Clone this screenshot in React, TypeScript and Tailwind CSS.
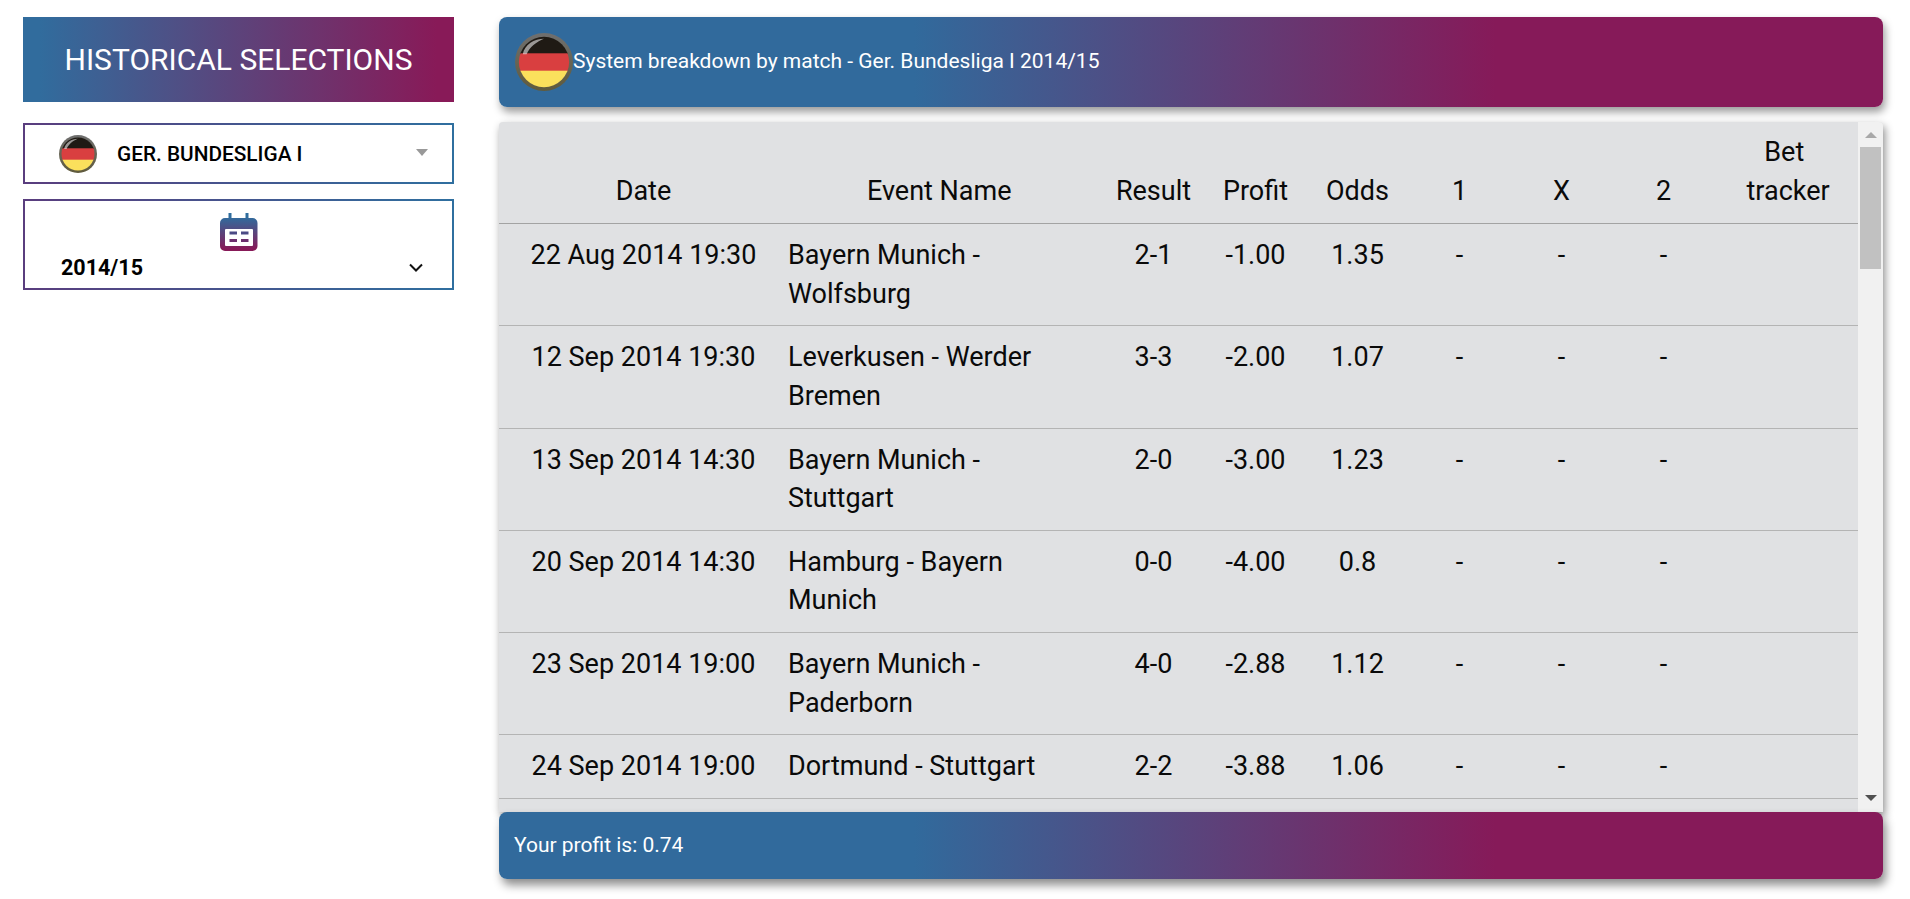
const rows = [
  { date: '22 Aug 2014 19:30', event: 'Bayern Munich - Wolfsburg', result: '2-1', profit: '-1.00', odds: '1.35' },
  { date: '12 Sep 2014 19:30', event: 'Leverkusen - Werder Bremen', result: '3-3', profit: '-2.00', odds: '1.07' },
  { date: '13 Sep 2014 14:30', event: 'Bayern Munich - Stuttgart', result: '2-0', profit: '-3.00', odds: '1.23' },
  { date: '20 Sep 2014 14:30', event: 'Hamburg - Bayern Munich', result: '0-0', profit: '-4.00', odds: '0.8' },
  { date: '23 Sep 2014 19:00', event: 'Bayern Munich - Paderborn', result: '4-0', profit: '-2.88', odds: '1.12' },
  { date: '24 Sep 2014 19:00', event: 'Dortmund - Stuttgart', result: '2-2', profit: '-3.88', odds: '1.06' },
];

function Flag({ id, className }: { id: string; className: string }) {
  return (
    <svg viewBox="0 0 60 60" className={className}>
      <defs>
        <clipPath id={id}>
          <circle cx="30" cy="30" r="26" />
        </clipPath>
        <linearGradient id={`${id}-ring`} x1="0" y1="0" x2="0" y2="1">
          <stop offset="0" stopColor="#6f6f6f" />
          <stop offset="1" stopColor="#5f5a3c" />
        </linearGradient>
      </defs>
      <circle cx="30" cy="30" r="30" fill={`url(#${id}-ring)`} />
      <g clipPath={`url(#${id})`}>
        <rect x="0" y="0" width="60" height="22" fill="#1f1a14" />
        <rect x="0" y="21" width="60" height="19" fill="#d93f40" />
        <rect x="0" y="39" width="60" height="21" fill="#fbe05c" />
        <path d="M8 22C10 12 20 6 30 6c-8 3-15 9-18 16z" fill="#ffffff" opacity="0.55" />
      </g>
    </svg>
  );
}

function CalendarIcon() {
  return (
    <svg viewBox="0 0 38 38" className="w-[38px] h-[38px]">
      <defs>
        <linearGradient id="cal-grad" x1="0" y1="0" x2="0" y2="1">
          <stop offset="0.1" stopColor="#2f6d9e" />
          <stop offset="0.95" stopColor="#871a58" />
        </linearGradient>
      </defs>
      <path
        d="M8.5 0h3v5h14V0h3v5h4a5 5 0 0 1 5 5v23a5 5 0 0 1-5 5H5a5 5 0 0 1-5-5V10a5 5 0 0 1 5-5h3.5z"
        fill="url(#cal-grad)"
      />
      <rect x="5" y="16" width="28" height="17" rx="1" fill="#ffffff" />
      <rect x="9.5" y="18.5" width="7.5" height="3" fill="#4b4a85" />
      <rect x="21" y="18.5" width="7.5" height="3" fill="#4b4a85" />
      <rect x="9.5" y="26" width="7.5" height="3" fill="#6b2f6e" />
      <rect x="21" y="26" width="7.5" height="3" fill="#6b2f6e" />
    </svg>
  );
}

export default function App() {
  return (
    <div className="flex min-h-screen bg-white font-[Roboto,sans-serif]">
      {/* Sidebar */}
      <aside className="w-[431px] ml-[23px] pt-[17px] shrink-0">
        <div className="h-[85px] flex items-center justify-center text-white text-[30px] leading-none bg-[linear-gradient(90deg,#316c9d_4%,#881a58_96%)]">
          HISTORICAL SELECTIONS
        </div>

        <div className="mt-[21px] p-[2px] h-[61px] bg-[linear-gradient(90deg,#5a3d7e,#2f6f9f)]">
          <div className="h-full bg-white flex items-center pl-[34px] pr-[24px]">
            <Flag id="flag-small" className="w-[38px] h-[38px]" />
            <span className="ml-[20px] mt-[2px] text-[20.8px] font-medium text-black">GER. BUNDESLIGA I</span>
            <span className="ml-auto mb-[3px] w-0 h-0 border-l-[6.5px] border-r-[6.5px] border-t-[7px] border-l-transparent border-r-transparent border-t-[#999999]" />
          </div>
        </div>

        <div className="mt-[15px] p-[2px] h-[91px] bg-[linear-gradient(90deg,#5a3d7e,#2f6f9f)]">
          <div className="h-full bg-white flex flex-col pt-[12px]">
            <div className="flex justify-center">
              <CalendarIcon />
            </div>
            <div className="flex items-center justify-between pl-[36px] pr-[29px] mt-[4px]">
              <span className="font-bold text-[21.5px] leading-[26px] text-black">2014/15</span>
              <svg viewBox="0 0 14 10" className="w-[14px] h-[10px]" fill="none" stroke="#111111" strokeWidth="2">
                <path d="M1 1.5l6 6 6-6" />
              </svg>
            </div>
          </div>
        </div>
      </aside>

      {/* Main */}
      <main className="w-[1384px] ml-[45px] pt-[17px] shrink-0">
        <div className="h-[90px] rounded-lg flex items-center pl-[16px] text-white text-[21px] bg-[linear-gradient(90deg,#316a9c_30%,#861a59_72%)] shadow-[2px_5px_8px_rgba(0,0,0,0.4)]">
          <Flag id="flag-large" className="w-[58px] h-[58px]" />
          <span>System breakdown by match - Ger. Bundesliga I 2014/15</span>
        </div>

        <div className="mt-[15px] h-[690px] flex overflow-hidden rounded-t bg-[#e0e1e3] shadow-[2px_4px_8px_rgba(0,0,0,0.45)]">
          <div className="w-[1359px] shrink-0">
            <table className="w-full table-fixed border-collapse text-[27px] leading-[38.6px] text-[#0a0a0a]">
              <colgroup>
                <col className="w-[289px]" />
                <col className="w-[314.5px]" />
                <col className="w-[102px]" />
                <col className="w-[102px]" />
                <col className="w-[102px]" />
                <col className="w-[102px]" />
                <col className="w-[102px]" />
                <col className="w-[102px]" />
                <col className="w-[143.5px]" />
              </colgroup>
              <thead>
                <tr className="border-b border-[#a3a3a3]">
                  <th className="pt-3 pb-[13px] font-normal align-bottom">Date</th>
                  <th className="pt-3 pb-[13px] pr-3 font-normal align-bottom">Event Name</th>
                  <th className="pt-3 pb-[13px] font-normal align-bottom">Result</th>
                  <th className="pt-3 pb-[13px] font-normal align-bottom">Profit</th>
                  <th className="pt-3 pb-[13px] font-normal align-bottom">Odds</th>
                  <th className="pt-3 pb-[13px] font-normal align-bottom">1</th>
                  <th className="pt-3 pb-[13px] font-normal align-bottom">X</th>
                  <th className="pt-3 pb-[13px] font-normal align-bottom">2</th>
                  <th className="pt-[11px] pb-[13px] pl-8 pr-9 font-normal align-bottom">Bet tracker</th>
                </tr>
              </thead>
              <tbody>
                {rows.map((row) => (
                  <tr key={row.date} className="border-b border-[#b4b4b4]">
                    <td className="py-3 text-center align-top">{row.date}</td>
                    <td className="py-3 pr-6 align-top">{row.event}</td>
                    <td className="py-3 text-center align-top">{row.result}</td>
                    <td className="py-3 text-center align-top">{row.profit}</td>
                    <td className="py-3 text-center align-top">{row.odds}</td>
                    <td className="py-3 text-center align-top">-</td>
                    <td className="py-3 text-center align-top">-</td>
                    <td className="py-3 text-center align-top">-</td>
                    <td className="py-3 align-top" />
                  </tr>
                ))}
              </tbody>
            </table>
          </div>

          {/* Scrollbar */}
          <div className="w-[25px] shrink-0 bg-[#f1f1f1] flex flex-col items-center">
            <div className="h-[25px] flex items-center justify-center">
              <span className="w-0 h-0 border-l-[6px] border-r-[6px] border-b-[6px] border-l-transparent border-r-transparent border-b-[#a8a8a8]" />
            </div>
            <div className="w-[21px] h-[122px] bg-[#c1c1c1]" />
            <div className="mt-[516px] h-[25px] flex items-center justify-center">
              <span className="w-0 h-0 border-l-[6px] border-r-[6px] border-t-[6px] border-l-transparent border-r-transparent border-t-[#505050]" />
            </div>
          </div>
        </div>

        <div className="h-[67px] rounded-lg flex items-center pl-[15px] text-white text-[21px] bg-[linear-gradient(90deg,#316a9c_30%,#861a59_72%)] shadow-[3px_6px_10px_rgba(0,0,0,0.45)] relative">
          Your profit is: 0.74
        </div>
      </main>
    </div>
  );
}
